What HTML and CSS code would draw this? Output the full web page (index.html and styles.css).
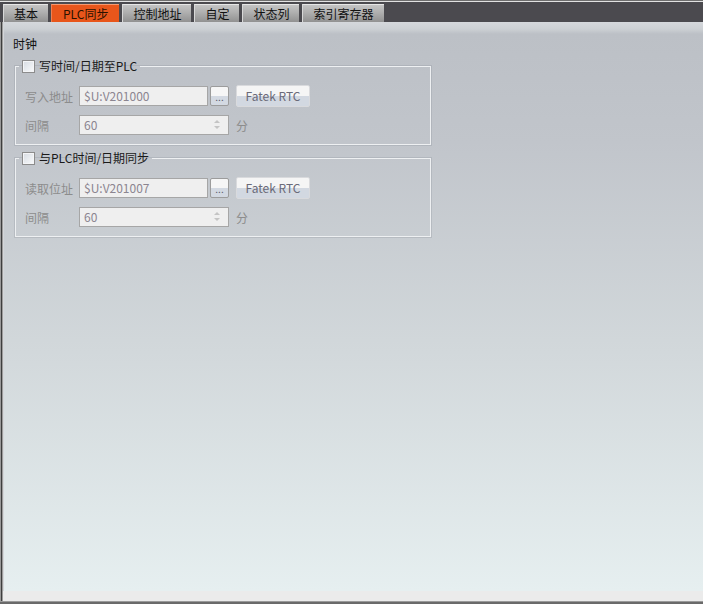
FILE: index.html
```html
<!DOCTYPE html>
<html lang="zh-CN">
<head>
    <meta charset="UTF-8">
    <title>PLC同步</title>
    <link rel="stylesheet" href="styles.css">
</head>
<body>
    <div class="window">
        <div class="tabbar">
            <div class="tab">基本</div>
            <div class="tab active">PLC同步</div>
            <div class="tab">控制地址</div>
            <div class="tab">自定</div>
            <div class="tab">状态列</div>
            <div class="tab">索引寄存器</div>
        </div>

        <div class="panel">
            <div class="section-title">时钟</div>

            <fieldset class="group">
                <legend><span class="check"></span>写时间/日期至PLC</legend>
                <div class="row">
                    <span class="label">写入地址</span>
                    <div class="field addr">$U:V201000</div>
                    <div class="dots">...</div>
                    <div class="btn">Fatek RTC</div>
                </div>
                <div class="row">
                    <span class="label">间隔</span>
                    <div class="field spin">60<span class="arrows"><i class="up"></i><i class="down"></i></span></div>
                    <span class="unit">分</span>
                </div>
            </fieldset>

            <fieldset class="group">
                <legend><span class="check"></span>与PLC时间/日期同步</legend>
                <div class="row">
                    <span class="label">读取位址</span>
                    <div class="field addr">$U:V201007</div>
                    <div class="dots">...</div>
                    <div class="btn">Fatek RTC</div>
                </div>
                <div class="row">
                    <span class="label">间隔</span>
                    <div class="field spin">60<span class="arrows"><i class="up"></i><i class="down"></i></span></div>
                    <span class="unit">分</span>
                </div>
            </fieldset>
        </div>

        <div class="footer"></div>
    </div>
</body>
</html>
```

FILE: styles.css
```css
html, body {
    margin: 0;
    padding: 0;
}

body {
    width: 703px;
    height: 604px;
    overflow: hidden;
    font-family: "Noto Sans CJK SC", "Noto Sans", sans-serif;
    font-size: 12px;
    color: #1a1a1a;
}

.window {
    display: flex;
    flex-direction: column;
    height: 604px;
    box-sizing: border-box;
    border-bottom: 2px solid #6a6a6a;
}

/* tabs */

.tabbar {
    display: flex;
    gap: 3px;
    height: 22px;
    box-sizing: border-box;
    padding: 3px 0 0 3px;
    background-color: #4b4a4f;
    border-top: 1px solid #6e6e6e;
    box-shadow: inset 0 1px 0 #e2e2e2;
}

.tab {
    height: 18px;
    line-height: 18px;
    padding: 0 10px;
    border-top: 1px solid #e6e6e6;
    border-left: 1px solid #d8d8d8;
    background: linear-gradient(to bottom, #c4c4c4, #b0b0b0 40%, #8e8e8e);
    color: #111;
    text-align: center;
}

.tab.active {
    padding: 0 11px;
    background: #e8561b;
    border-top-color: #f59a70;
    border-left-color: #f08050;
    color: #2a1200;
}

/* content */

.panel {
    flex: 1;
    padding: 14px 0 0 13px;
    box-shadow: inset 1px 0 0 #9a9a9a, inset 2px 0 0 #3e3e3e, inset 3px 0 0 #9c9c9c, inset 4px 0 0 #d4d6d9;
    background: linear-gradient(to bottom, #d5d8dc 0, #ccd0d4 7px, #bcc0c6 12px, #c1c5cb 120px, #d2d8db 330px, #e6eff0 100%);
}

.section-title {
    line-height: 16px;
    color: #111;
}

.group {
    width: 416px;
    box-sizing: border-box;
    margin: 7px 0 0 2px;
    padding: 12px 9px 8px 9px;
    border: 1px solid #eef0f2;
    box-shadow: 0 0 0 1px rgba(150, 155, 162, 0.35);
}

.group + .group {
    margin-top: 6px;
}

.group legend {
    display: flex;
    align-items: center;
    height: 14px;
    margin-left: -6px;
    padding: 0 3px;
    line-height: 14px;
    color: #1a1a1a;
}

.check {
    width: 11px;
    height: 11px;
    margin-right: 4px;
    border: 1px solid #8c8c8c;
    background: linear-gradient(135deg, #d6dbe2, #fafbfc);
    box-shadow: inset 0 0 0 1px #f4f5f7;
}

.row {
    display: flex;
    align-items: center;
    height: 22px;
}

.row + .row {
    margin-top: 7px;
}

.label {
    width: 54px;
    color: #8c8c8c;
}

.field {
    box-sizing: border-box;
    height: 20px;
    line-height: 18px;
    padding-left: 4px;
    border: 1px solid #a6a6a6;
    background-color: #efefef;
    color: #8b8590;
}

.addr {
    width: 129px;
}

.spin {
    position: relative;
    width: 150px;
}

.arrows {
    position: absolute;
    right: 8px;
    top: 4px;
    display: flex;
    flex-direction: column;
    gap: 3px;
}

.arrows i {
    width: 0;
    height: 0;
    border-left: 3px solid transparent;
    border-right: 3px solid transparent;
}

.arrows .up {
    border-bottom: 3px solid #c4c4c4;
}

.arrows .down {
    border-top: 3px solid #c4c4c4;
}

.dots {
    box-sizing: border-box;
    width: 19px;
    height: 20px;
    margin-left: 2px;
    border: 1px solid #9c9c9c;
    border-radius: 2px;
    background: linear-gradient(to bottom, #f6f6f6 50%, #d3d9e2 50%);
    color: #5a5a6a;
    font-size: 10px;
    line-height: 20px;
    text-align: center;
}

.btn {
    box-sizing: border-box;
    width: 74px;
    height: 22px;
    margin-left: 7px;
    border: 1px solid #d9dadd;
    border-radius: 2px;
    background: linear-gradient(to bottom, #f5f5f5 50%, #d2d8e1 50%);
    color: #6a6a78;
    line-height: 20px;
    text-align: center;
}

.unit {
    margin-left: 7px;
    color: #8c8c8c;
}

.footer {
    height: 10px;
    background-color: #ebebeb;
    border-bottom: 1px solid #9a9a9a;
    box-shadow: inset 1px 0 0 #9a9a9a, inset 2px 0 0 #3e3e3e, inset 3px 0 0 #9c9c9c;
}
```
